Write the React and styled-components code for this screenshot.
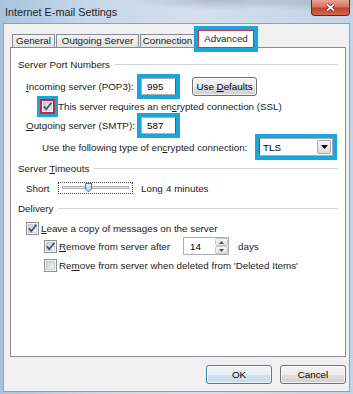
import React from "react";
import styled, { createGlobalStyle } from "styled-components";

const GlobalStyle = createGlobalStyle`
  html, body {
    margin: 0;
    padding: 0;
  }
  body {
    width: 353px;
    height: 394px;
    overflow: hidden;
    font-family: "Liberation Sans", Arial, sans-serif;
    font-size: 9.8px;
    color: #1b1b1b;
    background: #bcd0e6;
  }
`;

const Window = styled.div`
  width: 353px;
  height: 394px;
  box-sizing: border-box;
  padding: 0 3px 2px 3px;
  display: flex;
  flex-direction: column;
  background:
    radial-gradient(ellipse 90px 10px at 62% 0, rgba(110, 120, 135, 0.35), transparent),
    radial-gradient(ellipse 60px 9px at 88% 2px, rgba(120, 128, 140, 0.3), transparent),
    linear-gradient(90deg, #a9c3df 0%, #c6d7ea 25%, #d3dfec 55%, #c2d4e8 100%);
`;

const TitleBar = styled.div`
  height: 23px;
  display: flex;
  justify-content: space-between;
  align-items: flex-start;
`;

const Title = styled.div`
  padding: 5px 0 0 2px;
  font-size: 10.8px;
  line-height: 14px;
  color: #1e1e1e;
`;

const CloseButton = styled.div`
  width: 39px;
  height: 16px;
  box-sizing: border-box;
  border: 1px solid #6b2419;
  border-top: none;
  border-radius: 0 0 4px 4px;
  background: linear-gradient(#e8a595 0%, #d7735d 45%, #c2432b 55%, #d16a4f 100%);
  display: flex;
  align-items: center;
  justify-content: center;
`;

const Body = styled.div`
  flex: 1;
  border: 1px solid #8da2ba;
  background: #f0f0f0;
  padding: 10px 3px 0 6px;
  display: flex;
  flex-direction: column;
`;

const TabRow = styled.div`
  height: 13px;
  margin-left: 2px;
  display: flex;
  align-items: flex-end;
  gap: 1px;
  position: relative;
  z-index: 1;
`;

const Tab = styled.div`
  width: ${(p) => p.$w}px;
  box-sizing: border-box;
  height: ${(p) => (p.$active ? 18 : 13)}px;
  margin-bottom: ${(p) => (p.$active ? -1 : 0)}px;
  margin-left: ${(p) => (p.$active ? 2 : 0)}px;
  border: 1px solid ${(p) => (p.$active ? "#c8364a" : "#898c95")};
  border-bottom: ${(p) => (p.$active ? "1px solid #c8364a" : "none")};
  outline: ${(p) => (p.$active ? "4px solid #1aa6dd" : "none")};
  background: ${(p) =>
    p.$active ? "#fff" : "linear-gradient(#f3f3f3, #e3e3e3)"};
  display: flex;
  align-items: center;
  justify-content: center;
  line-height: 12px;
  white-space: nowrap;
`;

const Panel = styled.div`
  height: 310px;
  box-sizing: border-box;
  border: 1px solid #898c95;
  background: #fff;
  padding: 7px 7px 0 7px;
  display: flex;
  flex-direction: column;
`;

const Row = styled.div`
  height: 18px;
  margin-top: ${(p) => p.$mt || 0}px;
  padding-left: ${(p) => p.$indent || 0}px;
  display: flex;
  align-items: center;
  white-space: nowrap;
`;

const GroupLine = styled.div`
  flex: 1;
  height: 1px;
  margin-left: 5px;
  background: #cdd2d8;
`;

const Label = styled.span`
  width: ${(p) => (p.$w ? `${p.$w}px` : "auto")};
  margin-left: ${(p) => p.$ml || 0}px;
  flex-shrink: 0;
`;

const Key = styled.span`
  text-decoration: underline;
  text-underline-offset: 1px;
`;

const Field = styled.div`
  width: ${(p) => p.$w}px;
  height: 17px;
  box-sizing: border-box;
  border: 1px solid #abadb3;
  border-right-color: ${(p) => (p.$mark ? "#c8283a" : "#e3e9ef")};
  outline: ${(p) => (p.$mark ? "4px solid #1aa6dd" : "none")};
  background: #fff;
  padding-left: 5px;
  display: flex;
  align-items: center;
  color: #000;
`;

const WinButton = styled.div`
  width: ${(p) => p.$w}px;
  height: 19px;
  margin-left: ${(p) => p.$ml || 0}px;
  box-sizing: border-box;
  border: 1px solid ${(p) => (p.$focus ? "#3c7fb1" : "#707070")};
  border-radius: 3px;
  background: ${(p) =>
    p.$focus
      ? "linear-gradient(#eef6fc 0%, #e2edf6 50%, #d2e3f0 51%, #c7dcec 100%)"
      : "linear-gradient(#f4f4f4 0%, #ececec 50%, #dedede 51%, #d1d1d1 100%)"};
  box-shadow: inset 0 0 0 1px rgba(255, 255, 255, 0.7);
  display: flex;
  align-items: center;
  justify-content: center;
  color: #000;
  flex-shrink: 0;
`;

const BoxWrap = styled.span`
  width: 13px;
  height: 13px;
  display: inline-flex;
  flex-shrink: 0;
  outline: ${(p) => (p.$mark ? "3px solid #1aa6dd" : "none")};
  outline-offset: 1px;
  box-shadow: ${(p) => (p.$mark ? "0 0 0 1px #c8283a" : "none")};
`;

const Select = styled.div`
  width: 74px;
  height: 18px;
  box-sizing: border-box;
  border: 1px solid #abadb3;
  border-left-color: #c8283a;
  outline: 4px solid #1aa6dd;
  background: #fff;
  display: flex;
  align-items: center;
  justify-content: space-between;
  padding-left: 3px;
  color: #000;
`;

const DropButton = styled.div`
  width: 14px;
  height: 14px;
  margin-right: 1px;
  box-sizing: border-box;
  border: 1px solid #a8abb0;
  border-radius: 2px;
  background: linear-gradient(#f4f4f4, #dcdcdc);
  display: flex;
  align-items: center;
  justify-content: center;
`;

const SliderBox = styled.div`
  width: 75px;
  height: 12px;
  box-sizing: border-box;
  border: 1px dotted #444;
  display: flex;
  flex-shrink: 0;
`;

const Spinner = styled.div`
  width: 46px;
  height: 18px;
  box-sizing: border-box;
  border: 1px solid #abadb3;
  background: #fff;
  display: flex;
  justify-content: space-between;
  flex-shrink: 0;
  color: #000;
`;

const SpinValue = styled.span`
  padding-left: 6px;
  display: flex;
  align-items: center;
`;

const SpinButtons = styled.div`
  width: 13px;
  display: flex;
  flex-direction: column;
`;

const SpinButton = styled.div`
  flex: 1;
  border: 1px solid #c3c6cb;
  border-radius: 2px;
  background: linear-gradient(#f6f6f6, #e2e2e2);
  display: flex;
  align-items: center;
  justify-content: center;
`;

const Footer = styled.div`
  margin-top: 8px;
  display: flex;
  justify-content: flex-end;
`;

function CheckBox({ checked, mark }) {
  return (
    <BoxWrap $mark={mark}>
      <svg width="13" height="13" viewBox="0 0 13 13">
        <defs>
          <linearGradient id="cbInner" x1="0" y1="0" x2="1" y2="1">
            <stop offset="0" stopColor="#c9ccd2" />
            <stop offset="1" stopColor="#f7f7f8" />
          </linearGradient>
        </defs>
        <rect x="0.5" y="0.5" width="12" height="12" fill="#f5f5f5" stroke={mark ? "#c8283a" : "#8e8f8f"} />
        <rect x="2.5" y="2.5" width="8" height="8" fill="url(#cbInner)" stroke="#b4b7bc" strokeWidth="0.6" />
        {checked && (
          <path d="M2.8 6.4 L5.3 9.2 L10.4 2.8" fill="none" stroke="#3d5283" strokeWidth="1.8" />
        )}
      </svg>
    </BoxWrap>
  );
}

function GroupHeader({ mt, children }) {
  return (
    <Row $mt={mt}>
      <span>{children}</span>
      <GroupLine />
    </Row>
  );
}

function Slider() {
  return (
    <SliderBox>
      <svg width="73" height="10" viewBox="0 0 73 10">
        <defs>
          <linearGradient id="thumb" x1="0" y1="0" x2="0" y2="1">
            <stop offset="0" stopColor="#e4f3fb" />
            <stop offset="1" stopColor="#9fd0ee" />
          </linearGradient>
        </defs>
        <rect x="3.5" y="3.5" width="66" height="2" fill="#e7eaea" stroke="#b0b3b8" />
        <path d="M26.5 0.5 h6 v5.5 l-3 3 l-3 -3 z" fill="url(#thumb)" stroke="#3c7fb1" />
      </svg>
    </SliderBox>
  );
}

export default function App() {
  return (
    <>
      <GlobalStyle />
      <Window>
        <TitleBar>
          <Title>Internet E-mail Settings</Title>
          <CloseButton>
            <svg width="11" height="9" viewBox="0 0 11 9">
              <path d="M2 1.5 L9 7.5 M9 1.5 L2 7.5" stroke="#5a1a10" strokeWidth="3.2" />
              <path d="M2 1.5 L9 7.5 M9 1.5 L2 7.5" stroke="#fff" strokeWidth="1.8" />
            </svg>
          </CloseButton>
        </TitleBar>
        <Body>
          <TabRow>
            <Tab $w={43}>General</Tab>
            <Tab $w={83}>Outgoing Server</Tab>
            <Tab $w={55}>Connection</Tab>
            <Tab $w={56} $active>Advanced</Tab>
          </TabRow>
          <Panel>
            <GroupHeader>Server Port Numbers</GroupHeader>

            <Row $mt={4} $indent={8}>
              <Label $w={115}>
                <Key>I</Key>ncoming server (POP3):
              </Label>
              <Field $w={35} $mark>995</Field>
              <WinButton $w={65} $ml={16}>
                Use&nbsp;<Key>D</Key>efaults
              </WinButton>
            </Row>

            <Row $mt={2} $indent={23}>
              <CheckBox checked mark />
              <Label $ml={4}>
                This server requires an en<Key>c</Key>rypted connection (SSL)
              </Label>
            </Row>

            <Row $mt={1} $indent={8}>
              <Label $w={115}>
                <Key>O</Key>utgoing server (SMTP):
              </Label>
              <Field $w={35} $mark>587</Field>
            </Row>

            <Row $mt={4} $indent={24}>
              <Label $w={217}>
                Use the following type of en<Key>c</Key>rypted connection:
              </Label>
              <Select>
                <span>TLS</span>
                <DropButton>
                  <svg width="7" height="4" viewBox="0 0 7 4">
                    <path d="M0 0 H7 L3.5 4 Z" fill="#000" />
                  </svg>
                </DropButton>
              </Select>
            </Row>

            <GroupHeader mt={3}>
              Server <Key>T</Key>imeouts
            </GroupHeader>

            <Row $mt={2} $indent={8}>
              <Label $w={32}>Short</Label>
              <Slider />
              <Label $w={25} $ml={8}>Long</Label>
              <Label>4 minutes</Label>
            </Row>

            <GroupHeader mt={2}>Delivery</GroupHeader>

            <Row $mt={2} $indent={8}>
              <CheckBox checked />
              <Label $ml={2}>
                <Key>L</Key>eave a copy of messages on the server
              </Label>
            </Row>

            <Row $mt={0} $indent={26}>
              <CheckBox checked />
              <Label $w={124} $ml={2}>
                <Key>R</Key>emove from server after
              </Label>
              <Spinner>
                <SpinValue>14</SpinValue>
                <SpinButtons>
                  <SpinButton>
                    <svg width="5" height="3" viewBox="0 0 5 3">
                      <path d="M0 3 H5 L2.5 0 Z" fill="#4d4d4d" />
                    </svg>
                  </SpinButton>
                  <SpinButton>
                    <svg width="5" height="3" viewBox="0 0 5 3">
                      <path d="M0 0 H5 L2.5 3 Z" fill="#4d4d4d" />
                    </svg>
                  </SpinButton>
                </SpinButtons>
              </Spinner>
              <Label $ml={9}>days</Label>
            </Row>

            <Row $mt={1} $indent={26}>
              <CheckBox />
              <Label $ml={2}>
                Re<Key>m</Key>ove from server when deleted from 'Deleted Items'
              </Label>
            </Row>
          </Panel>
          <Footer>
            <WinButton $w={66} $focus>OK</WinButton>
            <WinButton $w={66} $ml={8}>Cancel</WinButton>
          </Footer>
        </Body>
      </Window>
    </>
  );
}
